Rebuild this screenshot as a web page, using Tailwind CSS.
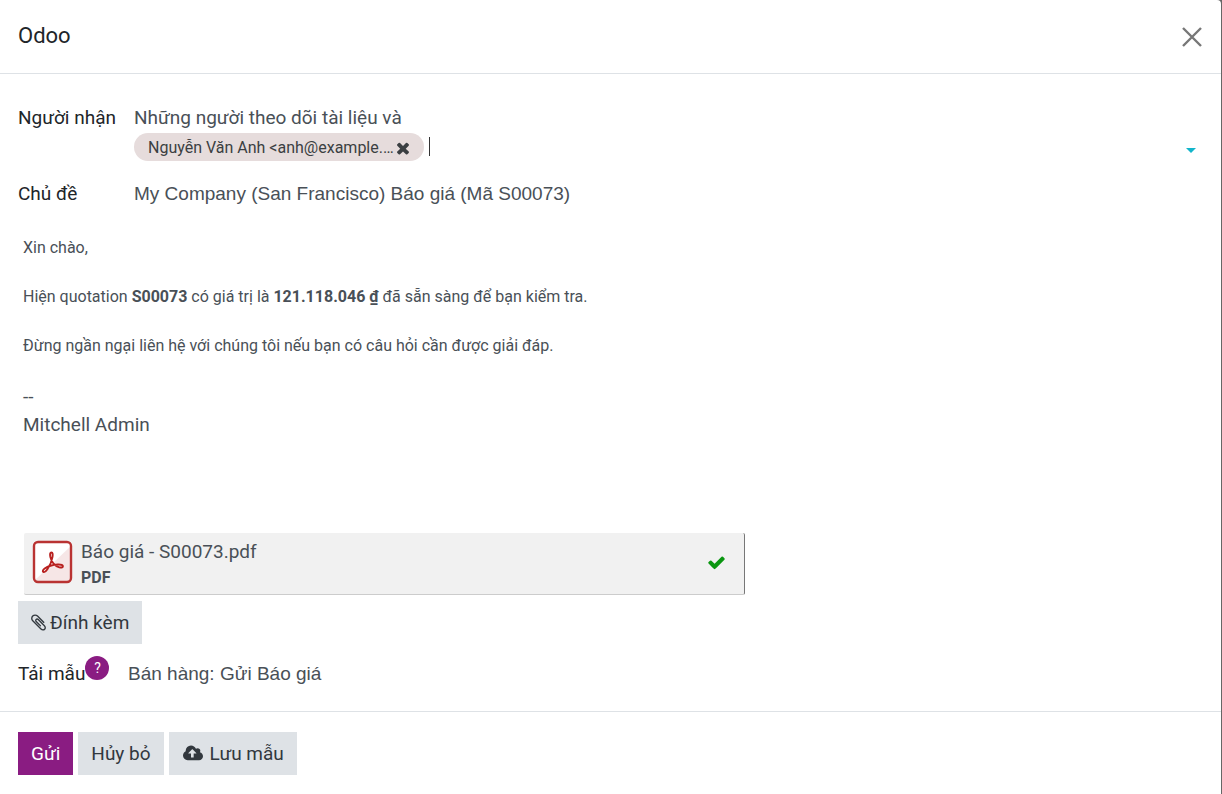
<!DOCTYPE html>
<html lang="vi">
<head>
<meta charset="utf-8">
<meta name="viewport" content="width=device-width, initial-scale=1">
<title>Odoo</title>
<script src="https://cdn.jsdelivr.net/npm/@tailwindcss/browser@4"></script>
</head>
<body class="min-h-screen bg-[#666666] font-[Roboto,'Noto_Sans',sans-serif] text-[19px] leading-7 text-[#495057]">
<form class="mr-px flex min-h-screen flex-col rounded-tr-sm bg-white" aria-labelledby="title">
  <header class="flex h-[74px] items-center justify-between border-b border-[#dee2e6] pr-[19px] pl-[18px]">
    <h1 id="title" class="pb-0.5 text-[22px] text-[#212529]">Odoo</h1>
    <button type="button" aria-label="Đóng" class="flex size-5 items-center justify-center text-[#777777]">
      <svg class="size-5" viewBox="0 0 20 20" fill="none" stroke="currentColor" stroke-width="2.400"><path d="M1 1l18 18M19 1L1 19"/></svg>
    </button>
  </header>

  <main class="flex grow flex-col px-[18px] pt-[30px]">
    <div class="flex">
      <label for="recipients" class="w-[116px] shrink-0 text-[#212529]">Người nhận</label>
      <div class="grow">
        <p>Những người theo dõi tài liệu và</p>
        <div class="flex h-8 items-center pt-px pb-1">
          <span class="flex h-7 items-center gap-px rounded-full bg-[#e6dcdc] pt-0.5 pr-3 pl-3.5 text-[16px] text-[#3b3f42]">Nguyễn Văn Anh &lt;anh@example.…
            <button type="button" aria-label="Xóa" class="flex size-[17px] items-center justify-center">
              <svg class="size-[18px] shrink-0" viewBox="0 0 1792 1792" fill="currentColor"><path d="M1490 1322q0 40-28 68l-136 136q-28 28-68 28t-68-28l-294-294-294 294q-28 28-68 28t-68-28l-136-136q-28-28-28-68t28-68l294-294-294-294q-28-28-28-68t28-68l136-136q28-28 68-28t68 28l294 294 294-294q28-28 68-28t68 28l136 136q28 28 28 68t-28 68l-294 294 294 294q28 28 28 68z"/></svg>
            </button>
          </span>
          <span class="ml-[5px] h-[19px] w-px bg-[#333333]"></span>
          <input id="recipients" type="text" class="min-w-0 grow outline-none">
          <svg class="mt-[7px] mr-[7px] h-[5px] w-[10px]" viewBox="0 0 10 5" fill="#12b5cb"><path d="M0 0h10L5 5z"/></svg>
        </div>
      </div>
    </div>

    <div class="mt-4 flex items-center">
      <label for="subject" class="w-[116px] shrink-0 text-[#212529]">Chủ đề</label>
      <input id="subject" type="text" value="My Company (San Francisco) Báo giá (Mã S00073)" class="min-w-0 grow font-['Liberation_Sans',sans-serif] text-[19px] outline-none">
    </div>

    <div class="mt-7 flex flex-col gap-[25px] pl-[5px] text-[16px] leading-6">
      <p>Xin chào,</p>
      <p>Hiện quotation <strong class="font-bold">S00073</strong> có giá trị là <strong class="font-bold">121.118.046 ₫</strong> đã sẵn sàng để bạn kiểm tra.</p>
      <p>Đừng ngần ngại liên hệ với chúng tôi nếu bạn có câu hỏi cần được giải đáp.</p>
      <div>
        <p class="text-[19px] leading-7">--<br>Mitchell Admin</p>
      </div>
    </div>

    <div class="mt-[94px] ml-1.5 flex h-[62px] w-[721px] max-w-full items-center rounded-xs border-r border-b border-r-[#777777] border-b-[#cccccc] bg-[#f1f1f1] pr-[18px] pl-2">
      <svg class="mb-1 h-[44px] w-[41px] shrink-0" viewBox="0 0 41 44" fill="none">
        <rect x="2" y="2" width="37" height="40" rx="4" fill="#ffffff"/>
        <path d="M39 6v32q0 4-4 4H6q-2 0-3-2z" fill="#f6e6e6"/>
        <rect x="2" y="2" width="37" height="40" rx="4" stroke="#b93332" stroke-width="2.400"/>
        <path d="M19.500 12.500c-1.600 0-1.600 2 -1.200 4.200 1 4.700 4.500 9.300 9 10.600 2.600.7 3.900-.2 3.600-1.300-.4-1.300-2.800-1.600-5.200-1.500-4.500.2-9.700 1.600-13 4-2 1.400-2.300 2.700-1.400 3.400 1.100.7 2.700-.5 4.100-2.600 2.300-3.400 4.500-8.300 5.100-12.400.4-2.500.2-4.400-1-4.400z" stroke="#b8201f" stroke-width="1.900" stroke-linejoin="round"/>
      </svg>
      <div class="ml-2 grow pt-0.5">
        <p class="leading-[26px]">Báo giá - S00073.pdf</p>
        <p class="text-[16px] leading-[26px] font-bold">PDF</p>
      </div>
      <svg class="mb-0.5 size-[19px]" viewBox="0 0 1792 1792" fill="#0a9610"><path d="M1671 566q0 40-28 68l-724 724-136 136q-28 28-68 28t-68-28l-136-136-362-362q-28-28-28-68t28-68l136-136q28-28 68-28t68 28l294 295 656-657q28-28 68-28t68 28l136 136q28 28 28 68z"/></svg>
    </div>

    <button type="button" class="mt-1.5 flex h-[43px] items-center gap-0.5 self-start bg-[#dee2e6] pr-[13px] pl-[11px] text-[#32383e]">
      <svg class="size-[19px]" viewBox="0 0 1792 1792" fill="currentColor"><path d="M1596 1385q0 117-79 196t-196 79q-135 0-235-100l-777-776q-113-115-113-271 0-159 110-270t269-111q158 0 273 113l605 606q10 10 10 22 0 16-30.500 46.500t-46.500 30.500q-13 0-23-10l-606-607q-79-77-181-77-106 0-179 75t-73 181q0 105 76 181l776 777q63 63 145 63 64 0 106-42t42-106q0-82-63-145l-581-581q-26-24-60-24-29 0-48 19t-19 48q0 32 25 59l410 410q10 10 10 22 0 16-31 47t-47 31q-12 0-22-10l-410-410q-63-61-63-149 0-82 57-139t139-57q88 0 149 63l581 581q100 98 100 235z"/></svg>
      Đính kèm
    </button>

    <div class="mt-3 mb-5 flex items-center">
      <div class="flex w-[110px] shrink-0">
        <label for="template" class="pt-1 text-[#212529]">Tải mẫu</label>
        <button type="button" aria-label="Trợ giúp" class="size-6 rounded-full bg-[#8a1c82] text-[14px] leading-6 text-white">?</button>
      </div>
      <input id="template" type="text" value="Bán hàng: Gửi Báo giá" class="min-w-0 grow pt-1 font-['Liberation_Sans',sans-serif] text-[19px] outline-none">
    </div>
  </main>

  <footer class="flex gap-[5px] border-t border-[#dee2e6] px-[18px] pt-5 pb-[19px]">
    <button type="submit" class="h-[43px] bg-[#8a1c82] px-[13px] text-white">Gửi</button>
    <button type="button" class="h-[43px] bg-[#dee2e6] px-[13px] text-[#32383e]">Hủy bỏ</button>
    <button type="button" class="flex h-[43px] items-center gap-[7px] bg-[#dee2e6] pr-[13px] pl-3.5 text-[#32383e]">
      <svg class="h-[19px] w-5" viewBox="0 0 1920 1792" fill="currentColor"><path d="M1280 864q0-14-9-23l-352-352q-9-9-23-9t-23 9l-351 351q-10 12-10 24 0 14 9 23t23 9h224v352q0 13 9.500 22.500t22.500 9.500h192q13 0 22.500-9.500t9.500-22.500v-352h224q13 0 22.500-9.500t9.500-22.500zm640 288q0 159-112.500 271.500t-271.500 112.500h-1088q-185 0-316.500-131.500t-131.500-316.500q0-130 70-240t188-165q-2-30-2-43 0-212 150-362t362-150q156 0 285.500 87t188.500 231q71-62 166-62 106 0 181 75t75 181q0 76-41 138 130 31 213.500 135.500t83.500 238.500z"/></svg>
      Lưu mẫu
    </button>
  </footer>
</form>
</body>
</html>
